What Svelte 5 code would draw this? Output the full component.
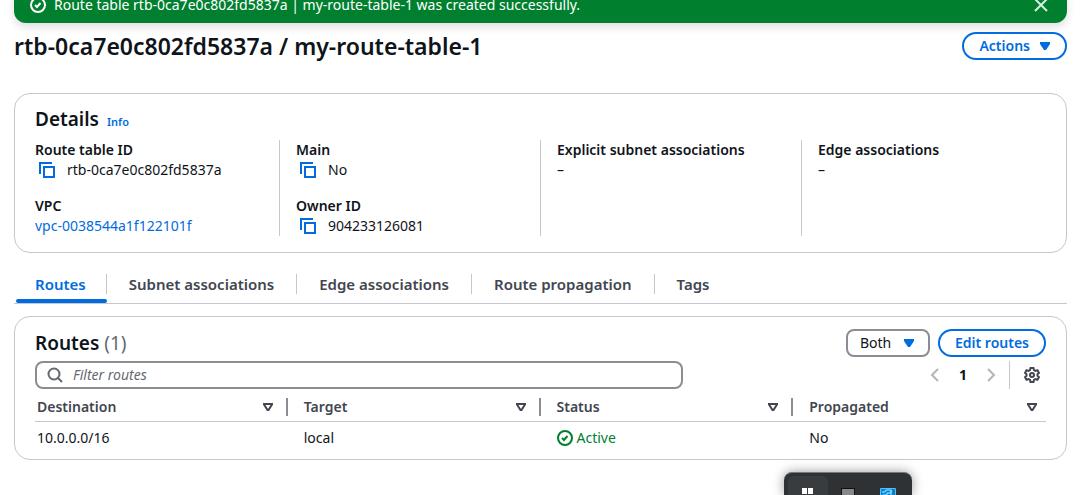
<script lang="ts">
  const details = [
    [
      { label: 'Route table ID', value: 'rtb-0ca7e0c802fd5837a', copy: true },
      { label: 'VPC', value: 'vpc-0038544a1f122101f', link: true }
    ],
    [
      { label: 'Main', value: 'No', copy: true },
      { label: 'Owner ID', value: '904233126081', copy: true }
    ],
    [{ label: 'Explicit subnet associations', value: '–' }],
    [{ label: 'Edge associations', value: '–' }]
  ];
  const tabs = ['Routes', 'Subnet associations', 'Edge associations', 'Route propagation', 'Tags'];
  const columns = ['Destination', 'Target', 'Status', 'Propagated'];
  let active = $state('Routes');
</script>

{#snippet check()}
  <svg class="icon" viewBox="0 0 16 16" aria-hidden="true">
    <circle cx="8" cy="8" r="7" /><path d="m5 8 2 2 3.5-4" />
  </svg>
{/snippet}

<div class="page">
  <div class="flash" role="status">
    {@render check()}
    <span class="message">Route table rtb-0ca7e0c802fd5837a | my-route-table-1 was created successfully.</span>
    <button class="bare" aria-label="Dismiss">
      <svg class="icon" viewBox="0 0 16 16"><path d="m2 2 12 12M14 2 2 14" /></svg>
    </button>
  </div>

  <header class="title">
    <h1>rtb-0ca7e0c802fd5837a / my-route-table-1</h1>
    <button class="pill">Actions <svg class="caret" viewBox="0 0 10 8"><path d="M0 0h10v2L6 8H4L0 2z" /></svg></button>
  </header>

  <section class="card details">
    <div class="heading"><h2>Details</h2><a class="info" href="#info">Info</a></div>
    <div class="grid">
      {#each details as group}
        <dl>
          {#each group as item}
            <div>
              <dt>{item.label}</dt>
              <dd>
                {#if item.copy}
                  <button class="bare copy" aria-label={`Copy ${item.label}`}>
                    <svg class="icon" viewBox="0 0 16 16"><path d="M1 12V1h12M5 5h10v10H5z" /></svg>
                  </button>
                {/if}
                {#if item.link}<a href="#vpc">{item.value}</a>{:else}<span>{item.value}</span>{/if}
              </dd>
            </div>
          {/each}
        </dl>
      {/each}
    </div>
  </section>

  <div class="tabs" role="tablist">
    {#each tabs as tab}
      <button role="tab" aria-selected={active === tab} onclick={() => (active = tab)}><span>{tab}</span></button>
    {/each}
  </div>

  <section class="card routes">
    <div class="toolbar">
      <h2>Routes <span class="count">(1)</span></h2>
      <div class="select">
        <select aria-label="Route type"><option>Both</option></select>
        <svg class="caret" viewBox="0 0 10 8"><path d="M0 0h10v2L6 8H4L0 2z" /></svg>
      </div>
      <button class="pill">Edit routes</button>
    </div>
    <div class="tools">
      <label class="search">
        <svg class="icon" viewBox="0 0 16 16" aria-hidden="true"><circle cx="7" cy="7" r="5.5" /><path d="m11 11 4 4" /></svg>
        <input type="search" placeholder="Filter routes" aria-label="Filter routes" />
      </label>
      <div class="pager">
        <button class="bare" aria-label="Previous page"><svg class="icon" viewBox="0 0 16 16"><path d="m11 2-6 6 6 6" /></svg></button>
        <button class="bare current">1</button>
        <button class="bare" aria-label="Next page"><svg class="icon" viewBox="0 0 16 16"><path d="m5 2 6 6-6 6" /></svg></button>
      </div>
      <button class="bare settings" aria-label="Preferences">
        <svg class="icon" viewBox="0 0 16 16">
          <path d="M6.5 1h3l.5 2 1.500.9 2-.6L15 5.900 13.500 7.300v1.400L15 10.100l-1.500 2.600-2-.6L10 13l-.5 2h-3L6 13l-1.500-.9-2 .6L1 10.100 2.500 8.700V7.300L1 5.900l1.500-2.600 2 .6L6 3z" />
          <circle cx="8" cy="8" r="2" />
        </svg>
      </button>
    </div>
    <table>
      <thead>
        <tr>
          {#each columns as column}
            <th scope="col">
              <div class="head">
                {column}
                <button class="bare" aria-label={`Sort by ${column}`}><svg class="sort" viewBox="0 0 10 8"><path d="M1 1h8v.5L5.500 7h-1L1 1.500z" /></svg></button>
              </div>
            </th>
          {/each}
        </tr>
      </thead>
      <tbody>
        <tr>
          <td>10.0.0.0/16</td>
          <td>local</td>
          <td><span class="status">{@render check()}Active</span></td>
          <td>No</td>
        </tr>
      </tbody>
    </table>
  </section>
</div>

<div class="dock" aria-hidden="true">
  <div class="tile">
    <svg viewBox="0 0 12 12"><path fill="#fff" d="M0 0h5v6H0zM6 0h5v6H6zM0 7h5v5H0zM6 7h5v5H6z" /></svg>
  </div>
  <div class="tile">
    <svg viewBox="0 0 14 12"><path fill="#111" d="M0 0h14v12H0z" /><path fill="#888" d="M1 1h12v11H1z" /></svg>
  </div>
  <div class="tile">
    <svg viewBox="0 0 16 12">
      <rect width="16" height="12" rx="1" fill="#55bff0" /><path fill="#0788dc" d="M1 1h12v11H1z" />
      <path d="M2 4h3l1-2h5v3H7v2H3M11 2v9M4 9h6" fill="none" stroke="#9de5ff" />
      <path fill="#2372b4" d="M13 1h2v11h-2z" />
    </svg>
  </div>
</div>

<style>
  :global(body) { margin: 0; background: #fff; }
  .page {
    box-sizing: border-box;
    display: flex;
    flex-direction: column;
    min-height: 100vh;
    padding: 0 13px 0 14px;
    overflow: hidden;
    color: #0f141a;
    font: 14px/20px "Noto Sans", "Open Sans", sans-serif;
  }
  h1, h2, dl, dd { margin: 0; }
  h1 { font-size: 23px; line-height: 30px; font-weight: 600; }
  h2 { font-size: 19px; line-height: 24px; font-weight: 600; }
  a { color: #006ce0; text-decoration: none; }
  button, input, select { font: inherit; color: inherit; }
  button { cursor: pointer; }
  .icon { display: block; flex: none; width: 16px; height: 16px; fill: none; stroke: currentColor; stroke-width: 2; }
  .bare { display: block; padding: 0; border: 0; background: none; }
  .caret { width: 10px; height: 8px; fill: #006ce0; }

  .flash {
    display: flex;
    align-items: center;
    gap: 8px;
    margin-top: -13px;
    padding: 8px 18px 8px 16px;
    border-radius: 12px;
    background: #00802f;
    box-shadow: 0 4px 8px #0002;
    color: #fff;
  }
  .message { flex: 1; }
  .flash .bare { color: #d9eee0; }
  .title { display: flex; align-items: center; justify-content: space-between; margin: 8px 0 32px; }
  .pill {
    display: flex;
    align-items: center;
    gap: 10px;
    box-sizing: border-box;
    height: 28px;
    padding: 0 15px;
    border: 2px solid #006ce0;
    border-radius: 14px;
    background: #fff;
    color: #006ce0;
    font-weight: 600;
  }
  .card { border: 1px solid #c6c6cd; border-radius: 16px; }
  .details { padding: 13px 20px 16px; overflow: hidden; }
  .heading { display: flex; align-items: baseline; gap: 8px; }
  .info { font-size: 11px; font-weight: 600; }
  .grid { display: grid; grid-template-columns: repeat(4, 1fr); margin: 8px -16px 0 -17px; }
  dl { display: flex; flex-direction: column; gap: 16px; padding-left: 16px; border-left: 1px solid #c6c6cd; }
  dl:first-child { border-color: transparent; }
  dt { font-weight: 600; }
  dd { display: flex; align-items: center; }
  .copy { padding: 0 12px 0 4px; color: #006ce0; }

  .tabs { display: flex; margin-top: 14px; border-bottom: 1px solid #c6c6cd; }
  .tabs button {
    display: flex;
    padding: 7px 0 9px;
    border: 0;
    background: none;
    color: #424650;
    font-size: 15px;
    font-weight: 600;
  }
  .tabs span { padding: 0 22px; border-right: 1px solid #c6c6cd; }
  .tabs button:first-child span { padding: 0 20px 0 21px; }
  .tabs button:last-child span { border: 0; }
  .tabs [aria-selected="true"] { position: relative; color: #006ce0; }
  .tabs [aria-selected="true"]::after {
    content: "";
    position: absolute;
    right: 0;
    bottom: 0;
    left: 2px;
    height: 4px;
    border-radius: 2px;
    background: #006ce0;
  }

  .routes { margin-top: 12px; padding: 12px 20px 5px; }
  .toolbar { display: flex; align-items: center; gap: 8px; }
  .toolbar h2 { flex: 1; }
  .count { color: #656871; font-weight: 400; }
  .select { position: relative; }
  .select select {
    display: block;
    appearance: none;
    box-sizing: border-box;
    height: 28px;
    padding: 0 36px 0 12px;
    border: 2px solid #8c8c94;
    border-radius: 8px;
    background: #fff;
  }
  .select .caret { position: absolute; top: 10px; right: 16px; pointer-events: none; }
  .tools { display: flex; align-items: center; margin-top: 4px; }
  .search {
    display: flex;
    align-items: center;
    flex: 0 1 624px;
    gap: 10px;
    height: 24px;
    padding: 0 10px;
    border: 2px solid #8c8c94;
    border-radius: 8px;
    color: #656871;
  }
  input { flex: 1; min-width: 0; padding: 0; border: 0; outline: 0; background: none; }
  input::placeholder { color: #656871; font-style: italic; opacity: 1; }
  .pager { display: flex; align-items: center; gap: 16px; margin-left: auto; padding-right: 10px; color: #b4b4bb; }
  .current { color: #0f141a; font-weight: 700; }
  .settings { padding: 6px 6px 6px 14px; border-left: 1px solid #c6c6cd; color: #424650; }

  table { width: 100%; table-layout: fixed; border-collapse: collapse; }
  th { padding: 9px 0 5px; border-bottom: 1px solid #c6c6cd; color: #424650; font-weight: 600; text-align: left; }
  .head { display: flex; align-items: center; justify-content: space-between; height: 18px; padding: 0 13px 0 16px; border-right: 2px solid #8c8c94; }
  th:first-child .head, td:first-child { padding-left: 2px; }
  th:last-child .head { padding-right: 9px; border: 0; }
  td { padding: 6px 16px; }
  .sort { display: block; width: 10px; height: 8px; fill: none; stroke: #424650; stroke-width: 2; }
  .status { display: flex; align-items: center; gap: 4px; color: #00802f; }

  .dock {
    position: fixed;
    bottom: 0;
    left: 784px;
    display: flex;
    box-sizing: border-box;
    height: 23px;
    padding: 3px 4px;
    border-top: 1px solid #777;
    border-radius: 8px 8px 0 0;
    background: #2f3235;
    box-shadow: 0 0 12px #0006;
  }
  .tile { display: flex; align-items: flex-end; justify-content: center; width: 40px; height: 24px; }
  .tile:first-child { background: #393c3f; border-radius: 5px; }
  .tile svg { height: 12px; }
</style>
